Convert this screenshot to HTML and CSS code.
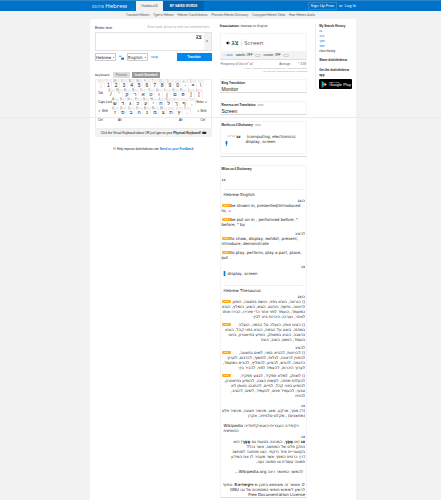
FILE: index.html
```html
<!DOCTYPE html>
<html lang="en">
  <head>
    <meta charset="UTF-8" />
    <meta name="viewport" content="width=device-width, initial-scale=1" />
    <title>Do It In Hebrew</title>
    <link rel="stylesheet" href="styles.css">
  </head>
  <body>
    <header class="topbar">
      <a class="logo" href="#"><small>DO IT IN</small> Hebrew</a>
      <a class="tab active" href="#">TRANSLATE</a>
      <a class="tab saved" href="#">MY SAVED WORDS</a>
      <div class="account">
        <a class="signup" href="#">Sign Up Free</a>
        <a href="#">or&nbsp; Log In</a>
      </div>
    </header>
    <nav class="subnav">
      <a href="#">Translate Hebrew</a>
      <a href="#">Type in Hebrew</a>
      <a href="#">Hebrew Transliteration</a>
      <a href="#">Phonetic Hebrew Dictionary</a>
      <a href="#">Conjugate Hebrew Verbs</a>
      <a href="#">Hear Hebrew Audio</a>
    </nav>
    <div class="fold"></div>

    <main class="page">
      <section class="left">
        <div class="enter">
          <label for="text">Enter text</label>
          <span>Enter word, phrase or web root unlimited times</span>
        </div>
        <div class="box">
          <textarea id="text" dir="rtl">צג</textarea>
          <span class="side">x</span>
        </div>
        <div class="controls">
          <select aria-label="From"><option>Hebrew</option></select>
          <svg class="swap" viewBox="0 0 6 5"><path d="M0 1h3M3 3h3v2H3z" stroke="#1a8fd8" fill="#1a8fd8" /></svg>
          <select aria-label="To"><option>English</option></select>
          <a href="#">swap</a>
          <button class="translate">Translate</button>
        </div>

        <div class="kbtabs">
          <span>Keyboard:</span>
          <button>Phonetic</button>
          <button class="on">Israeli Standard</button>
        </div>
        <div class="keyboard" id="keyboard"></div>
        <div class="hint">Click the Virtual Keyboard above OR just type on your <b>Physical Keyboard! ⌨</b></div>
        <div class="feedback">
          <svg viewBox="0 0 10 10"><circle cx="5" cy="5" r="4" fill="#ffd48a" stroke="#f5a623" stroke-width="2" /></svg>
          Help improve doitinhebrew.com <a href="#">Send us your Feedback</a>
        </div>
      </section>

      <section class="middle">
        <h2><b>Translation:</b> Hebrew to English</h2>
        <div class="card result">
          <div class="word">
            <svg viewBox="0 0 12 10"><path d="M1 3h2l4-3v10L3 7H1z" /><path d="M8 2q4 3 0 6" fill="none" stroke="#000" stroke-width="2" /></svg>
            <span class="heb">צג</span>
            <span class="eng">Screen</span>
          </div>
          <div class="options">
            <a href="#">☆ save</a>
            <span>vowels: OFF</span><i></i>
            <span>cursive: OFF</span><i></i>
          </div>
        </div>
        <div class="freq"><span>Frequency of Use of "צג"</span><span class="avg">Average</span><span>* 3.88</span></div>
        <div class="source">*Approx. occurrences per million printed words = 3.88 from 27/09/15-06<br>The University of Edinburgh School of Informatics</div>

        <div class="card bing">
          <h3>Bing Translation</h3>
          <p>Monitor</p>
        </div>
        <div class="card reverso">
          <h3>Reverso.net Translation <a href="#">view</a></h3>
          <p>Screen</p>
        </div>
        <div class="card morfix">
          <h3>Morfix.co.il Dictionary <a href="#">view</a></h3>
          <div class="entry">
            <div class="term"><i>(ש"ע)</i><b>צג</b></div>
            <div>&nbsp;(computing, electronics)<br>display, screen</div>
            <svg class="pin" viewBox="0 0 6 12"><path d="M1 0h4v7H4v5H2V7H1z" fill="#0a78d6" /></svg>
          </div>
        </div>

        <div class="card milon">
          <h3>Milon.co.il Dictionary</h3>
          <div class="head">צג</div>
          <h4>Hebrew-English</h4>
          <div class="he">הוצג</div>
          <p><em>verb</em>be shown in, presented/introduced<br>to, =</p>
          <p><em>verb</em>be put on in , performed before, "<br>before, " by</p>
          <div class="he">להציג</div>
          <p><em>verb</em>to show, display, exhibit, present,<br>introduce, demonstrate</p>
          <p><em>verb</em>to play, perform, play a part, place,<br>put</p>
          <div class="he">צג</div>
          <p class="noun"><svg class="pin" viewBox="0 0 6 12"><path d="M1 0h4v12H1z" fill="#0a78d6" /></svg>display, screen</p>

          <h4>Hebrew Thesaurus</h4>
          <div class="he">הוצג</div>
          <p class="he"><em>verb</em>() הוראה, הובא בפני, הושם בתצוגה, הופגן<br>לראווה, נחשף, הודגם, הוגש, הוצע, הומלץ, הובא<br>כמועמד, הועמד לפני אחר כדי שיכירו, הכירו אותו<br>לאחר, נערכה היכרות בינו לבין-</p>
          <p class="he"><em>verb</em>() הציגו אותו, הועלה על הבמה, הועלה<br>במחזה, בוצע על הבמה, הובא בפני קהל, הובא<br>בהצגה, הובא במשחק, הופיע בתיאטרון, בוים:<br>הועמד, הושם, הוצב, הונח</p>
          <div class="he">להציג</div>
          <p class="he"><em>verb</em>() להראות, להביא בפני, לשים בתצוגה,<br>להפגין לראווה, לגלות, לחשוף, להדגים, לערוך<br>הדגמה, להגיש, להציע, להמליץ, להביא כמועמד,<br>לערוך היכרות, להעמיד לפני, להכיר בין-</p>
          <p class="he"><em>verb</em>() לשחק, למלא תפקיד, לבצע תפקיד,<br>להעלות מחזה, לעשות הצגה, להופיע בתיאטרון,<br>להופיע בפני קהל, לביים, להתנהג באופן לא<br>טבעי, להעמיד פנים, להעמיד, לשים, להציב,<br>להניח</p>
          <div class="he gap">צג</div>
          <p class="he">(ז') מסך, מרקע, מצג, מכשיר תצוגה, מכשיר פלט<br>(מחשבים) , מקלט-טלוויזיה, אקרן</p>

          <h4 class="wiki">Wikipedia ויקיפדיה העברית-האנציקלופדיה<br>החופשית</h4>
          <div class="he">צג</div>
          <p class="he"><b>צג</b> (או <b>מָסָך</b>, המכונה בטעות גם <b>מֶסֶך</b>) הוא<br>התקן פלט של המחשב, אשר נכלל<br>בקטגוריית ציוד היקפי. הצג מתחבר למחשב<br>דרך כרטיס המסך אשר מעביר לו את המידע<br>תמונה עומדת או תמונה נעה.</p>
          <p class="he more">להמשך המאמר ראה Wikipedia.org...</p>
          <p class="he legal">© מאמר זה משתמש בתוכן מ-<b>ויקיפדיה®</b> וכפוף<br>לרשיון לשימוש חופשי במסמכים של גנו GNU<br>Free Documentation License</p>
        </div>
      </section>

      <aside class="right">
        <h3>My Search History</h3>
        <a href="#">צג</a>
        <a href="#">ערב</a>
        <a href="#">מסך</a>
        <a href="#">מצב</a>
        <span>clear history</span>
        <h3>Share doitinhebrew</h3>
        <h3>Get the doitinhebrew<br>app</h3>
        <a class="play" href="#">
          <svg viewBox="0 0 10 12"><path d="M1 0v12l4-6z" fill="#00c3ff" /><path d="M1 0l6 4-2 2z" fill="#00e676" /><path d="M1 12l6-4-2-2z" fill="#ff3a44" /><path d="M7 4l3 2-3 2-2-2z" fill="#ffd500" /></svg>
          <span><small>GET IT ON</small>Google Play</span>
        </a>
      </aside>
    </main>

    <script>
      // label, keys, shifted keys and end label of each row, left to right
      const rows = [
        ["", ";1234567890-=\\", "~!@#$%^*()_+|:", "←"],
        ["Tab", "/'קראטוןםפ][", "QWERTYUIOP{}", ""],
        ["Caps Lock", "שדגכעיחלךף,", "ASDFGHJKL:\"", "Enter ↵"],
        ["⇧ Shift", "זסבהנמצתץ.", "ZXCVBNM;:?", "⇧ Shift"],
      ];
      const keyboard = document.getElementById("keyboard");

      for (const [start, keys, shifted, end] of rows) {
        const row = document.createElement("div");
        row.className = "krow";
        if (start) row.innerHTML += `<span class="mod">${start}</span>`;
        [...keys].forEach((key, i) => {
          row.innerHTML += `<button class="key"><small>${shifted[i]}</small>${key}</button>`;
        });
        if (end) row.innerHTML += `<span class="mod end">${end}</span>`;
        keyboard.append(row);
      }

      const last = document.createElement("div");
      last.className = "krow last";
      last.innerHTML =
        '<span class="mod">Ctrl</span><span class="mod">Alt</span><span class="space"></span><span class="mod">Alt</span><span class="mod end">Ctrl</span>';
      keyboard.append(last);
    </script>
  </body>
</html>
```
FILE: styles.css
```css
* {
  box-sizing: border-box;
}
body {
  margin: 0;
  background: #f2f2f2;
  color: #222;
  font-family: "Liberation Sans", Arial, sans-serif;
  font-size: 4px;
  line-height: 5px;
  position: relative;
}
a {
  color: #0a78d6;
  text-decoration: none;
}
h2,
h3,
h4,
p {
  margin: 0;
  font-size: 4px;
}
button,
select,
textarea {
  font-family: inherit;
  margin: 0;
  padding: 0;
}
.topbar {
  background: #0072c8;
  border-top: 1px solid #2c86cc;
  height: 11px;
  padding: 0 85px 0 92px;
  display: flex;
  line-height: 10px;
}
.topbar a {
  color: #fff;
}
.logo {
  font-family: "Open Sans", sans-serif;
  font-size: 6px;
  width: 44px;
  white-space: nowrap;
}
.logo small {
  font-size: 3px;
}
.topbar .tab {
  width: 27px;
  text-align: center;
  font-size: 3px;
  white-space: nowrap;
}
.topbar .active {
  background: #f2f2f2;
  color: #444;
  font-family: "DejaVu Sans", sans-serif;
}
.topbar .saved {
  width: 41px;
  background: #0062ae;
  font-weight: bold;
}
.account {
  margin-left: auto;
  display: flex;
  gap: 2px;
  white-space: nowrap;
}
.account .signup {
  border: 1px solid #2c86cc;
  padding: 0 2px;
  line-height: 6px;
  margin: 1px 0;
}
.subnav {
  height: 8px;
  display: flex;
  justify-content: center;
  gap: 2px;
  font-family: Roboto, sans-serif;
  font-size: 3px;
  line-height: 8px;
}
.subnav a {
  color: #666;
  white-space: nowrap;
}
.subnav a + a::before {
  content: "·";
  margin-right: 1px;
}
/* faint rule across the whole page */
.fold {
  position: absolute;
  top: 117px;
  left: 0;
  right: 0;
  height: 1px;
  background: #ebebeb;
}
.page {
  margin: 0 85px 0 90px;
  padding: 0 4px 3px 5px;
  background: #fff;
  border-radius: 2px 2px 0 0;
  display: grid;
  grid-template-columns: 117fr 88fr 37fr;
  column-gap: 8px;
}
.page > * {
  min-width: 0;
}
.enter {
  display: flex;
  justify-content: space-between;
  margin-top: 6px;
  padding-right: 2px;
  white-space: nowrap;
}
.enter span {
  font-size: 3px;
  color: #aaa;
}
.box {
  display: flex;
  height: 19px;
  margin-top: 2px;
  border: 1px solid #e4e4e4;
}
.box textarea {
  flex: 1;
  min-width: 0;
  border: 0;
  outline: 0;
  resize: none;
  font-size: 6px;
  line-height: 8px;
  padding: 0 2px;
  overflow: hidden;
}
.side {
  width: 7px;
  background: #f2f2f2;
  text-align: center;
  line-height: 17px;
  font-size: 3px;
}
.controls {
  display: flex;
  align-items: center;
  gap: 3px;
  margin-top: 2px;
}
.controls select {
  width: 21px;
  height: 8px;
  border: 1px solid #ccc;
  border-radius: 0;
  background: linear-gradient(#999, #999) right 1px center / 1px 1px no-repeat #fff;
  appearance: none;
  font-family: "DejaVu Sans", sans-serif;
  font-size: 4px;
  color: #222;
}
.swap {
  width: 5px;
  height: 5px;
}
.controls a {
  font-size: 3px;
}
.controls .translate {
  margin-left: auto;
  width: 35px;
  height: 8px;
  border: 0;
  background: #0088ee;
  color: #fff;
  font-size: 3px;
  font-weight: bold;
}
.kbtabs {
  display: flex;
  gap: 2px;
  margin-top: 11px;
  font-size: 3px;
  line-height: 6px;
}
.kbtabs span {
  width: 16px;
  font-family: "DejaVu Sans", sans-serif;
}
.kbtabs button {
  width: 17px;
  height: 6px;
  border: 0;
  background: #ddd;
  color: #777;
  font-size: 3px;
}
.kbtabs .on {
  width: 28px;
  background: #999;
  color: #fff;
  font-weight: bold;
}
.keyboard {
  height: 50px;
  border: 1px solid #eee;
  margin-top: 1px;
  padding: 0 1px;
}
.krow {
  display: flex;
  gap: 1px;
  height: 9px;
  padding-left: 1px;
}
.mod {
  flex: none;
  width: 9px;
  font-size: 3px;
  line-height: 8px;
  white-space: nowrap;
}
.krow:nth-child(3) .mod,
.krow:nth-child(4) .mod {
  width: 13px;
}
.krow .end {
  margin-left: auto;
}
.krow:first-child .end {
  width: 4px;
}
.key {
  width: 7px;
  height: 8px;
  border: 0;
  border-right: 1px solid #f2f2f2;
  background: linear-gradient(#f0f0f0 3px, #fff 3px);
  font-size: 5px;
  line-height: 5px;
  color: #222;
}
.key small {
  display: block;
  font-size: 3px;
  line-height: 3px;
  text-align: left;
  color: #888;
}
.space {
  width: 50px;
}
.last .mod:nth-child(2) {
  margin-left: 10px;
}
.hint {
  height: 8px;
  line-height: 8px;
  background: #f2f2f2;
  text-align: center;
  white-space: nowrap;
  font-size: 3px;
}
.feedback {
  margin-top: 10px;
  text-align: center;
  font-size: 3px;
}
.feedback svg {
  width: 3px;
  height: 3px;
}
.feedback a {
  font-weight: bold;
}
h2 {
  font-family: "DejaVu Sans", sans-serif;
  font-size: 3px;
  font-weight: normal;
  margin-top: 5px;
  white-space: nowrap;
}
.card {
  border: 1px solid #f4f4f4;
  border-bottom-color: #ddd;
  padding: 0 1px;
  white-space: nowrap;
}
.result {
  margin-top: 4px;
  padding: 0;
}
.word {
  display: flex;
  align-items: center;
  height: 17px;
  padding-left: 5px;
}
.word svg {
  width: 4px;
  height: 4px;
}
.heb {
  font-size: 7px;
  line-height: 8px;
  padding: 0 3px 0 2px;
}
.eng {
  border-left: 1px solid #eee;
  padding-left: 2px;
  font-family: "Open Sans", sans-serif;
  font-size: 6px;
  line-height: 8px;
  color: #555;
}
.options {
  display: flex;
  align-items: center;
  gap: 2px;
  height: 8px;
  padding-left: 2px;
  background: #f3f3f3;
  font-size: 3px;
}
.options span {
  margin-left: 1px;
}
.options i {
  width: 6px;
  height: 3px;
  border: 1px solid #ccc;
  border-radius: 2px;
}
.freq {
  display: flex;
  gap: 8px;
  margin-top: 2px;
  padding: 0 1px;
  font-size: 3px;
  color: #666;
}
.freq .avg {
  margin-left: auto;
}
.source {
  text-align: right;
  font-size: 2px;
  line-height: 3px;
  color: #999;
  white-space: nowrap;
}
.card h3 {
  padding-top: 1px;
  font-family: "Liberation Sans", sans-serif;
  font-size: 3px;
}
.card h3 a {
  font-weight: normal;
  color: #888;
  padding-left: 1px;
}
.bing,
.reverso {
  margin-top: 8px;
  height: 14px;
}
.bing {
  margin-top: 6px;
}
.bing p,
.reverso p {
  font-size: 5px;
  line-height: 6px;
}
.morfix {
  margin-top: 6px;
  height: 36px;
}
.morfix,
.milon {
  font-family: "DejaVu Sans", sans-serif;
}
.entry {
  display: grid;
  grid-template-columns: 15px 1fr;
  column-gap: 3px;
  margin-top: 6px;
  padding: 0 2px 9px 6px;
  border-bottom: 1px solid #f2f2f2;
  position: relative;
}
.term {
  display: flex;
  gap: 1px;
}
.term i {
  color: #999;
  font-size: 3px;
}
.pin {
  width: 3px;
  height: 5px;
}
.entry .pin {
  position: absolute;
  left: 3px;
  top: 7px;
}
.milon {
  margin-top: 8px;
}
.milon p {
  margin-bottom: 4px;
}
.head {
  margin-top: 5px;
}
h4 {
  border-top: 1px solid #eee;
  margin: 7px 2px 1px;
  padding-top: 2px;
  font-weight: normal;
}
em {
  display: inline-block;
  width: 9px;
  height: 3px;
  border-radius: 1px;
  background: #ffad1f;
  color: #fff;
  font-size: 2px;
  line-height: 3px;
  font-style: normal;
  text-align: center;
  vertical-align: top;
  margin-top: 1px;
}
.he {
  direction: rtl;
  text-align: right;
}
.he em {
  float: left;
}
.milon p.he {
  margin-bottom: 3px;
}
.gap {
  padding-top: 2px;
}
.milon .noun {
  margin: 2px 0 9px 1px;
}
.noun .pin {
  vertical-align: middle;
  margin-right: 2px;
}
.wiki {
  border: 0;
  margin-top: 3px;
}
.milon p.more {
  margin: 5px 2px 8px 0;
}
.milon p.legal {
  margin: 0;
}
/* Hebrew lines are set flush to the right edge of the card */
.milon div.he,
.milon p.he {
  text-align: start;
}
.right {
  margin-top: 5px;
  padding-left: 3px;
  border-left: 1px solid #eee;
  height: 64px;
  font-size: 3px;
  white-space: nowrap;
}
.right h3 {
  font-size: 3px;
}
.right > a,
.right > span {
  display: block;
}
.right span + h3 {
  margin: 4px 0 5px;
}
.right .play {
  display: flex;
  align-items: center;
  gap: 2px;
  height: 10px;
  margin-top: 1px;
  padding-left: 2px;
  border-radius: 1px;
  background: #000;
  color: #fff;
}
.play svg {
  width: 6px;
  height: 7px;
}
.play span {
  font-size: 4px;
  line-height: 4px;
}
.play small {
  display: block;
  font-size: 2px;
  line-height: 2px;
}
```
